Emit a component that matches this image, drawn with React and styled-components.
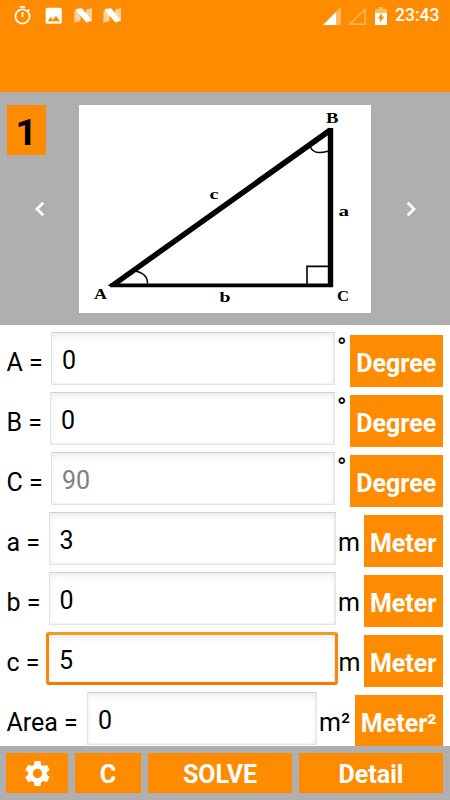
import React from "react";
import styled, { createGlobalStyle, css } from "styled-components";
import {
  MdChevronLeft,
  MdChevronRight,
  MdImage,
  MdOutlineTimer,
  MdSettings
} from "react-icons/md";

const ORANGE = "#ff8c00";
const GREY = "#afafaf";

const GlobalStyle = createGlobalStyle`
  body {
    margin: 0;
    background: #fff;
    font-family: Roboto, "Liberation Sans", sans-serif;
  }
  * {
    box-sizing: border-box;
  }
`;
const Screen = styled.div`
  display: flex;
  flex-direction: column;
  width: 450px;
  height: 800px;
  overflow: hidden;
`;
const Header = styled.header`
  flex: none;
  height: 92px;
  background: ${ORANGE};
`;
const StatusBar = styled.div`
  display: flex;
  align-items: center;
  justify-content: space-between;
  height: 31px;
  padding: 0 10.5px 0 12px;
  color: #fff;
`;
const StatusGroup = styled.div`
  display: flex;
  align-items: center;
  gap: ${props => props.$gap}px;

  svg {
    display: block;
  }
`;
const Clock = styled.span`
  margin-left: 1.5px;
  font-size: 17.5px;
  line-height: 31px;
  font-weight: 500;
`;
const Carousel = styled.section`
  display: flex;
  flex: none;
  height: 233px;
  padding-top: 13px;
  background: ${GREY};
`;
const CarouselSide = styled.div`
  width: 79px;
`;
const Badge = styled.div`
  width: 39.5px;
  height: 50px;
  margin-left: 6.5px;
  background: ${ORANGE};
  color: #000;
  font-size: 37.5px;
  line-height: 54px;
  font-weight: 700;
  text-align: center;
`;
const ArrowButton = styled.button`
  display: block;
  width: 28px;
  height: 28px;
  margin: ${props => props.$top}px 0 0 26px;
  padding: 0;
  border: 0;
  background: none;
  color: #fff;
  font-size: 28px;

  svg {
    display: block;
  }
  path:last-child {
    stroke: #fff;
    stroke-width: 0.4px;
  }
`;
const Figure = styled.svg`
  display: block;
  flex: none;
  width: 291.5px;
  height: 207.5px;
  background: #fff;
`;
const Form = styled.main`
  flex: none;
  height: 421px;
  padding-top: 7px;
  overflow: hidden;
`;
const Row = styled.div`
  display: flex;
  height: 60px;
  padding: 0 7px 0 6.5px;
`;
const Label = styled.label`
  flex: none;
  width: ${props => props.$width}px;
  color: #000;
  font-size: 25px;
  line-height: 62px;
  white-space: pre;
`;
const Field = styled.input`
  flex: none;
  width: ${props => props.$width}px;
  height: 53px;
  padding: 4px 10px 0;
  border: 1px solid #e4e4e4;
  border-top-color: #d0d0d0;
  border-radius: 0;
  outline: 0;
  background: #fff;
  box-shadow: inset 0 3px 6px rgba(0, 0, 0, 0.07), inset -1px -1px 1px rgba(0, 0, 0, 0.04);
  color: #000;
  font: 400 25px Roboto, "Liberation Sans", sans-serif;

  &:disabled {
    color: #808080;
  }

  ${props => props.$active && css`
    border: 3px solid #f8870b;
    border-color: #f99a1e #f8870b #f47b00;
    border-radius: 3px;
  `}
`;
const Unit = styled.span`
  flex: none;
  margin-left: ${props => (props.$tight ? 0.5 : 2.5)}px;
  color: #000;
  font-size: 25px;
  line-height: 62px;

  ${props => props.$raised && css`
    font-weight: 500;
    line-height: 32px;
  `}
`;
const UnitButton = styled.button`
  flex: none;
  width: ${props => props.$width}px;
  height: 52px;
  margin: 3px 0 0 auto;
  padding: 5px 0 0;
  border: 0;
  background: ${ORANGE};
  color: #fff;
  font: 700 25px Roboto, "Liberation Sans", sans-serif;
`;
const Toolbar = styled.footer`
  display: flex;
  flex: none;
  gap: 7px;
  height: 54px;
  padding: 7px 7px 7px 6px;
  background: ${GREY};
`;
const ToolButton = styled.button`
  display: flex;
  align-items: center;
  justify-content: center;
  width: ${props => props.$width}px;
  height: 40px;
  padding: ${props => props.$drop}px 0 0;
  border: 0;
  background: ${ORANGE};
  color: #fff;
  font: 700 25px Roboto, "Liberation Sans", sans-serif;
`;

const NougatIcon = () => (
  <svg width="20" height="15" viewBox="0 0 20 15" fill="#fff">
    <path d="M.5 2.5L6.6 6v7L.3 14.8zM12 1.8L18 0v12.4l-6-1.6z" opacity=".6" />
    <path d="M1.8 1L8 .2 18 12.4l-5.6 2.2L1.8 2.6z" />
  </svg>
);

const SignalIcon = () => (
  <svg width="18" height="18" viewBox="0 0 18 18" fill="#fff">
    <path d="M0 18L18 0v18z" opacity=".4" />
    <path d="M0 18L13 5v13z" />
  </svg>
);

const NoSignalIcon = () => (
  <svg width="20" height="18" viewBox="0 0 20 18">
    <path d="M2 17.2L17.2 2v15.2z" fill="none" stroke="#fff" strokeWidth="1.5" opacity=".4" />
  </svg>
);

const BatteryIcon = () => (
  <svg width="12" height="18" viewBox="0 0 12 18" fill="#fff">
    <path d="M4 0h4v2h3q1 0 1 1v3H0V3q0-1 1-1h3z" opacity=".4" />
    <path d="M0 6h12v11q0 1-1 1H1q-1 0-1-1z" />
    <path d="M7 6.2v3.6h2.3L5 15.5v-4H2.7z" fill={ORANGE} />
  </svg>
);

const vertices = [
  { text: "A", x: 94, y: 299, width: 13 },
  { text: "B", x: 326, y: 122.5, width: 12.5 },
  { text: "C", x: 337, y: 300.5, width: 12 },
  { text: "a", x: 338.5, y: 216, width: 10.5 },
  { text: "b", x: 219.5, y: 301.5, width: 11 },
  { text: "c", x: 209.5, y: 199, width: 9 }
];

const Triangle = () => (
  <Figure viewBox="79 105 291.5 207.5">
    <g fill="none" stroke="#000">
      <path d="M110 285.4H333" strokeWidth="3.6" />
      <path d="M330.5 287V128" strokeWidth="5.4" />
      <path d="M134 270.8q14 2.5 13.5 13" strokeWidth="1.4" />
      <path d="M310 146q2 6.5 9 6.5 4 0 9-1.2" strokeWidth="1.4" />
      <path d="M307 284v-17.6h21" strokeWidth="1.6" />
    </g>
    <path d="M107.5 285.7L329 127.5l3.5 4.6L117 285.5l-2 1z" />
    {vertices.map(({ text, x, y, width }) => (
      <text
        key={text}
        x={x}
        y={y}
        textLength={width}
        lengthAdjust="spacingAndGlyphs"
        fontFamily="'Liberation Serif', serif"
        fontSize="14"
        fontWeight="700"
      >
        {text}
      </text>
    ))}
  </Figure>
);

// label = label column width, field = input width
const rows = [
  { name: "A", label: 44.5, field: 283.5, value: "0", unit: "°", button: "Degree", size: 93.5 },
  { name: "B", label: 43.5, field: 284.5, value: "0", unit: "°", button: "Degree", size: 93.5 },
  { name: "C", label: 44.5, field: 283.5, value: "90", unit: "°", button: "Degree", size: 93.5, disabled: true },
  { name: "a", label: 42, field: 287, value: "3", unit: "m", button: "Meter", size: 79.5 },
  { name: "b", label: 42, field: 287, value: "0", unit: "m", button: "Meter", size: 79.5 },
  { name: "c", label: 39.5, field: 292, value: "5", unit: "m", button: "Meter", size: 79.5, active: true },
  { name: "Area", label: 80.5, field: 229.5, value: "0", unit: "m²", button: "Meter²", size: 88.5 }
];

export default () => {
  return (
    <>
      <GlobalStyle />
      <Screen>
        <Header>
          <StatusBar>
            <StatusGroup $gap={9.5}>
              <MdOutlineTimer size={21} />
              <MdImage size={21.5} />
              <NougatIcon />
              <NougatIcon />
            </StatusGroup>
            <StatusGroup $gap={7}>
              <SignalIcon />
              <NoSignalIcon />
              <BatteryIcon />
              <Clock>23:43</Clock>
            </StatusGroup>
          </StatusBar>
        </Header>
        <Carousel>
          <CarouselSide>
            <Badge>1</Badge>
            <ArrowButton $top={40}>
              <MdChevronLeft />
            </ArrowButton>
          </CarouselSide>
          <Triangle />
          <CarouselSide>
            <ArrowButton $top={90}>
              <MdChevronRight />
            </ArrowButton>
          </CarouselSide>
        </Carousel>
        <Form>
          {rows.map(row => (
            <Row key={row.name}>
              <Label htmlFor={row.name} $width={row.label}>{`${row.name} =`}</Label>
              <Field
                id={row.name}
                defaultValue={row.value}
                disabled={row.disabled}
                $width={row.field}
                $active={row.active}
              />
              <Unit $raised={row.unit === "°"} $tight={row.active}>{row.unit}</Unit>
              <UnitButton $width={row.size}>{row.button}</UnitButton>
            </Row>
          ))}
        </Form>
        <Toolbar>
          <ToolButton $width={62} $drop={0}>
            <MdSettings size={31} />
          </ToolButton>
          <ToolButton $width={66} $drop={3}>C</ToolButton>
          <ToolButton $width={144} $drop={3}>SOLVE</ToolButton>
          <ToolButton $width={144} $drop={3}>Detail</ToolButton>
        </Toolbar>
      </Screen>
    </>
  );
};
